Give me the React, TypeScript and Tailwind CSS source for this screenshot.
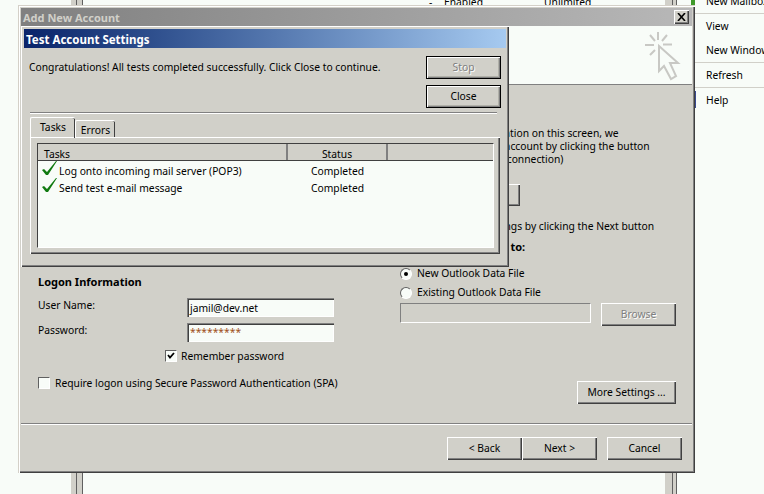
const face = 'bg-[#d1d0c9]';
const raised =
  'bg-[#d1d0c9] shadow-[inset_1px_1px_#ffffff,inset_-1px_-1px_#404040,inset_-2px_-2px_#808080]';
const sunken =
  'bg-[#f8fcf8] shadow-[inset_1px_1px_#808080,inset_2px_2px_#404040,inset_-1px_-1px_#ffffff]';

function Btn({ label, className, disabled }: { label: string; className: string; disabled?: boolean }) {
  return (
    <div
      className={`${raised} flex items-center justify-center whitespace-nowrap ${className} ${
        disabled ? 'text-[#808080] [text-shadow:1px_1px_#ffffff]' : ''
      }`}
    >
      {label}
    </div>
  );
}

function DarkBtn({ label, disabled }: { label: string; disabled?: boolean }) {
  return (
    <div
      className={`flex h-[23px] w-[75px] items-center justify-center border border-black ${face} shadow-[inset_1px_1px_#ffffff,inset_-1px_-1px_#808080,inset_-2px_-2px_#b0b0a8] ${
        disabled ? 'text-[#808080] [text-shadow:1px_1px_#ffffff]' : ''
      }`}
    >
      {label}
    </div>
  );
}

function Check() {
  return (
    <svg width="17" height="16" viewBox="0 0 17 16" className="shrink-0">
      <path d="M1 9 L3 8 L6 11 L15 0 L16 0 L7 14 L5 14 Z" fill="#107a10" />
    </svg>
  );
}

function CursorIcon() {
  return (
    <svg width="36" height="50" viewBox="0 0 36 50" className="absolute right-[11px] top-[5px]">
      <path
        d="M0 14 H9 M18 13.5 H27 M13 1 V9 M5 4 L10 10 M22 4 L17 10 M5 24 L10 19"
        stroke="#c8c8c4"
        strokeWidth="2"
        fill="none"
      />
      <path
        d="M14 15 V40 L19 35 L26 48 L31 45 L25 32 L33 32 Z"
        fill="#f8fcf8"
        stroke="#c8c8c4"
        strokeWidth="2"
      />
    </svg>
  );
}

function Field({ label, value, className }: { label: string; value: string; className?: string }) {
  return (
    <div className="flex items-start">
      <div className="w-[149px] pt-[1px]">{label}</div>
      <div className={`${sunken} flex h-[19px] w-[147px] items-center pl-[3px] ${className ?? ''}`}>{value}</div>
    </div>
  );
}

function Radio({ label, on }: { label: string; on?: boolean }) {
  return (
    <div className="flex h-[13px] items-center gap-[5px]">
      <div className="flex h-[12px] w-[12px] items-center justify-center rounded-full border border-[#606060] border-r-white border-b-white bg-[#f8fcf8]">
        {on && <div className="h-[4px] w-[4px] rounded-full bg-black" />}
      </div>
      <span>{label}</span>
    </div>
  );
}

function TaskRow({ label }: { label: string }) {
  return (
    <div className="flex h-[17px] items-start pl-[3px]">
      <Check />
      <span className="ml-[1px] mt-[4px] w-[252px]">{label}</span>
      <span className="mt-[4px]">Completed</span>
    </div>
  );
}

function TestDialog() {
  return (
    <div
      className={`absolute left-[3px] top-[21px] flex h-[241px] w-[488px] flex-col p-[3px] ${raised}`}
    >
      <div className="flex h-[19px] items-center bg-gradient-to-r from-[#0a246a] to-[#a6caf0] pl-[2px] pt-[2px] text-[11.5px] font-bold text-white">
        Test Account Settings
      </div>
      <div className="relative h-[64px]">
        <div className="absolute left-[5px] top-[13px] whitespace-nowrap">
          Congratulations! All tests completed successfully. Click Close to continue.
        </div>
        <div className="absolute left-[402px] top-[8px] flex flex-col gap-[6px]">
          <DarkBtn label="Stop" disabled />
          <DarkBtn label="Close" />
        </div>
      </div>
      <div className="ml-[6px] mr-[9px] h-[2px] border-t border-[#808080] border-b border-b-white" />
      <div className="ml-[6px] mt-[3px] flex h-[20px] items-end">
        <div className="z-10 -mb-px flex h-[21px] w-[45px] items-start justify-center rounded-t-[2px] border-l border-t border-white pt-[3px] shadow-[inset_-1px_0_#404040]">
          Tasks
        </div>
        <div className="flex h-[17px] w-[40px] items-center justify-center rounded-t-[2px] border-l border-t border-white pt-[2px] shadow-[inset_-1px_0_#404040]">
          Errors
        </div>
      </div>
      <div className="ml-[6px] mr-[6px] flex h-[117px] flex-col border-l border-t border-white px-[6px] pt-[5px] shadow-[inset_-1px_-1px_#404040,inset_-2px_-2px_#808080]">
        <div className="flex h-[105px] flex-col border-l border-t border-[#404040] border-r border-r-white border-b border-b-white bg-[#f8fcf8]">
          <div className={`flex h-[17px] shrink-0 items-center border-b border-[#404040] ${face}`}>
            <div className="h-full w-[250px] border-r-2 border-[#808080] pl-[6px] pt-[4px]">Tasks</div>
            <div className="h-full w-[100px] border-r-2 border-[#808080] pt-[4px] text-center">Status</div>
            <div className="flex-1" />
          </div>
          <TaskRow label="Log onto incoming mail server (POP3)" />
          <TaskRow label="Send test e-mail message" />
        </div>
      </div>
    </div>
  );
}

function AddAccountDialog() {
  return (
    <div
      className={`absolute left-[18px] top-[5px] flex h-[468px] w-[677px] flex-col p-[3px] shadow-[inset_1px_1px_#d4d0c8,inset_2px_2px_#ffffff,inset_-1px_-1px_#404040,inset_-2px_-2px_#808080] ${face}`}
    >
      <div className="flex h-[18px] shrink-0 items-center justify-between bg-gradient-to-r from-[#808080] to-[#b8b8b8] pl-[2px] pr-[3px] text-[11px] font-bold text-[#d1d0c9]">
        <span>Add New Account</span>
        <div className={`flex h-[14px] w-[15px] items-center justify-center ${raised}`}>
          <svg width="9" height="8" viewBox="0 0 9 8">
            <path d="M1 0 L8 8 M8 0 L1 8" stroke="black" strokeWidth="1.6" />
          </svg>
        </div>
      </div>
      <div className="relative h-[59px] shrink-0 border-b border-[#808080] bg-[#f8fcf8]">
        <CursorIcon />
      </div>
      <div className="flex flex-1">
        <div className="flex w-[379px] flex-col pl-[17px] pt-[190px]">
          <div className="text-[11px] font-bold">Logon Information</div>
          <div className="mt-[10px] flex flex-col gap-[6px]">
            <Field label="User Name:" value="jamil@dev.net" className="pt-[2px]" />
            <Field label="Password:" value="*********" className="pb-[1px] text-[#a05020]" />
          </div>
          <div className="mt-[7px] flex h-[13px] items-center pl-[127px]">
            <div className="flex h-[12px] w-[12px] items-center justify-center border border-[#606060] border-r-white border-b-white bg-[#f8fcf8]">
              <svg width="8" height="7" viewBox="0 0 8 7">
                <path d="M1 3 L3 5.5 L7 1" stroke="black" strokeWidth="1.8" fill="none" />
              </svg>
            </div>
            <span className="ml-[4px] pt-[1px]">Remember password</span>
          </div>
          <div className="mt-[14px] flex h-[13px] items-center">
            <div className="h-[12px] w-[12px] border border-[#606060] border-r-white border-b-white bg-[#f8fcf8]" />
            <span className="ml-[5px] pt-[1px]">Require logon using Secure Password Authentication (SPA)</span>
          </div>
        </div>
        <div className="flex flex-1 flex-col pt-[42px]">
          <div className="-ml-[22px] whitespace-nowrap">After filling out the information on this screen, we</div>
          <div className="-ml-[23px] whitespace-nowrap">recommend you test your account by clicking the button</div>
          <div className="-ml-[18px] whitespace-nowrap">below. (Requires network connection)</div>
          <Btn label="Test Account Settings ..." className="-ml-[20px] mt-[18px] h-[22px] w-[140px]" />
          <div className="ml-[19px] mt-[14px] whitespace-nowrap">Test Account Settings by clicking the Next button</div>
          <div className="-ml-[14px] mt-[7px] whitespace-nowrap text-[11px] font-bold">Deliver new messages to:</div>
          <div className="mt-[14px] flex flex-col gap-[6px]">
            <Radio label="New Outlook Data File" on />
            <Radio label="Existing Outlook Data File" />
          </div>
          <div className="mt-[4px] flex items-start gap-[10px]">
            <div className="h-[20px] w-[191px] border border-[#808080] border-r-white border-b-white" />
            <Btn label="Browse" className="h-[23px] w-[75px]" disabled />
          </div>
          <div className="mt-[55px] flex pl-[177px]">
            <Btn label="More Settings ..." className="h-[23px] w-[99px]" />
          </div>
        </div>
      </div>
      <div className="h-[2px] shrink-0 border-t border-[#808080] border-b border-b-white" />
      <div className="flex h-[45px] shrink-0 justify-end pr-[10px] pt-[12px]">
        <Btn label="< Back" className="h-[23px] w-[75px]" />
        <Btn label="Next >" className="h-[23px] w-[75px]" />
        <Btn label="Cancel" className="ml-[10px] h-[23px] w-[75px]" />
      </div>
      <TestDialog />
    </div>
  );
}

function BackgroundWindow() {
  return (
    <>
      <div className="absolute left-[429px] top-[-4px]">-</div>
      <div className="absolute left-[444px] top-[-4px]">Enabled</div>
      <div className="absolute left-[544px] top-[-4px]">Unlimited</div>
      <div className="absolute left-[71px] top-0 h-full w-[12px] border-r border-[#606060] bg-[#d1d0c9]">
        <div className="h-full w-[6px] border-r border-[#606060]" />
      </div>
      <div className="absolute left-[665px] top-0 h-full w-[12px] border-r border-[#606060] bg-[#d1d0c9]">
        <div className="h-full w-[8px] border-r border-[#606060]" />
      </div>
      <div className="absolute left-[691px] top-0 h-[5px] w-[4px] bg-[#3f9a2a]" />
      <div className="absolute left-[695px] top-[91px] h-[17px] w-px bg-[#3a4a90]" />
      <div className="absolute left-[695px] top-[-7px] flex h-[120px] w-[69px] flex-col whitespace-nowrap pl-[11px]">
        <div className="h-[20px] leading-[16px]">New Mailbox</div>
        <div className="-ml-[11px] h-px bg-[#d1d0c9]" />
        <div className="mt-[6px] h-[24px]">View</div>
        <div className="h-[18px]">New Window</div>
        <div className="-ml-[11px] h-px bg-[#d1d0c9]" />
        <div className="mt-[6px] h-[18px]">Refresh</div>
        <div className="-ml-[11px] h-px bg-[#d1d0c9]" />
        <div className="mt-[6px]">Help</div>
      </div>
    </>
  );
}

export default function App() {
  return (
    <div className="relative h-[494px] w-[764px] overflow-hidden bg-[#f8fcf8] font-['Noto_Sans',sans-serif] text-[10.3px] leading-[13px] text-black">
      <BackgroundWindow />
      <AddAccountDialog />
    </div>
  );
}
